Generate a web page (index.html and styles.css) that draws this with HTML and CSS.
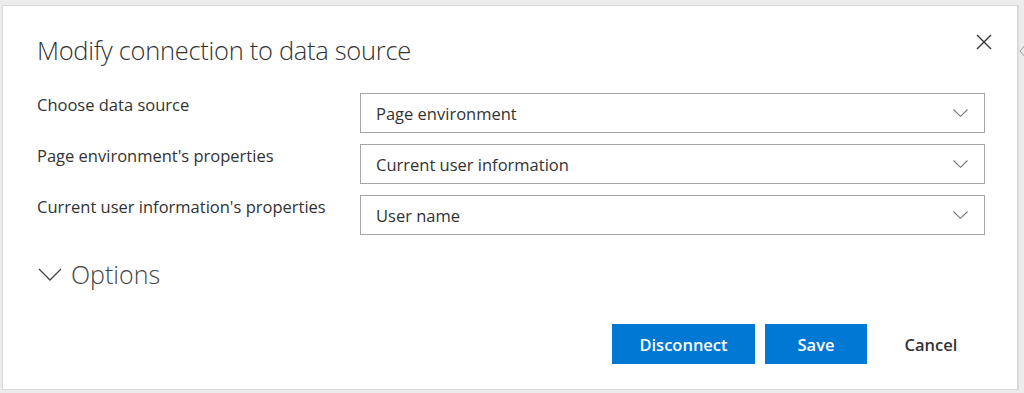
FILE: index.html
```html
<!DOCTYPE html>
<html lang="en">
<head>
    <meta charset="UTF-8">
    <title>Modify connection to data source</title>
    <link rel="stylesheet" href="styles.css">
</head>
<body>
    <div class="dialog">
        <div class="dialog-header">
            <h1 class="dialog-title">Modify connection to data source</h1>
            <button class="close-button" aria-label="Close">
                <svg width="16" height="16" viewBox="0 0 16 16"><path d="M1 1 L15 15 M15 1 L1 15" stroke="#333" stroke-width="1.4" fill="none"/></svg>
            </button>
        </div>

        <div class="form-grid">
            <label class="field-label">Choose data source</label>
            <div class="dropdown">
                <span>Page environment</span>
                <svg class="chevron" width="15" height="8" viewBox="0 0 15 8"><path d="M0.5 0.5 L7.5 7.3 L14.5 0.5" stroke="#777" stroke-width="1.1" fill="none"/></svg>
            </div>

            <label class="field-label">Page environment's properties</label>
            <div class="dropdown">
                <span>Current user information</span>
                <svg class="chevron" width="15" height="8" viewBox="0 0 15 8"><path d="M0.5 0.5 L7.5 7.3 L14.5 0.5" stroke="#777" stroke-width="1.1" fill="none"/></svg>
            </div>

            <label class="field-label">Current user information's properties</label>
            <div class="dropdown">
                <span>User name</span>
                <svg class="chevron" width="15" height="8" viewBox="0 0 15 8"><path d="M0.5 0.5 L7.5 7.3 L14.5 0.5" stroke="#777" stroke-width="1.1" fill="none"/></svg>
            </div>
        </div>

        <div class="options-toggle">
            <svg width="24" height="14" viewBox="0 0 24 14"><path d="M1 1 L12 12 L23 1" stroke="#444" stroke-width="1.3" fill="none"/></svg>
            <span>Options</span>
        </div>

        <div class="dialog-footer">
            <button class="btn btn-primary btn-disconnect">Disconnect</button>
            <button class="btn btn-primary btn-save">Save</button>
            <button class="btn btn-plain">Cancel</button>
        </div>
    </div>
    <div class="side-strip">
        <svg width="8" height="16" viewBox="0 0 8 16"><path d="M7 1 L1 8 L7 15" stroke="#999" stroke-width="1" fill="none"/></svg>
    </div>
</body>
</html>
```

FILE: styles.css
```css
body {
    margin: 0;
    padding: 5px 0 3px 2px;
    background-color: #ececec;
    font-family: "Open Sans", "Noto Sans", Arial, sans-serif;
    color: #333;
    display: flex;
    height: 393px;
    box-sizing: border-box;
    overflow: hidden;
}
.dialog {
    flex-shrink: 0;
    width: 1016px;
    height: 385px;
    box-sizing: border-box;
    background-color: white;
    border: 1px solid #d8d8d8;
    padding: 0 32px 0 34px;
    display: flex;
    flex-direction: column;
}
.side-strip {
    flex: 1;
    min-width: 0;
    overflow: hidden;
    padding-top: 37px;
    border-left: 1px solid #dcdcdc;
}
.dialog-header {
    display: flex;
    justify-content: space-between;
    align-items: center;
    height: 87px;
}
.dialog-title {
    margin: 0;
    font-size: 25.5px;
    font-weight: 300;
    color: #333;
    letter-spacing: -0.3px;
}
.close-button {
    align-self: flex-start;
    background: none;
    border: none;
    padding: 0;
    margin: 28px -7px 0 0;
    cursor: pointer;
}
.form-grid {
    display: grid;
    grid-template-columns: 323px 1fr;
    grid-auto-rows: 40px;
    row-gap: 11px;
}
.field-label {
    font-size: 16.5px;
    color: #333;
}
.dropdown {
    border: 1px solid #a6a6a6;
    display: flex;
    align-items: center;
    justify-content: space-between;
    padding: 0 16px 0 15px;
    font-size: 16.5px;
    color: #333;
}
.chevron {
    margin-bottom: 1px;
}
.options-toggle {
    display: flex;
    align-items: center;
    gap: 9px;
    margin-top: 22px;
    height: 34px;
    font-size: 25px;
    font-weight: 300;
    color: #444;
}
.options-toggle svg {
    margin-top: 1px;
    margin-left: 1px;
}
.dialog-footer {
    display: flex;
    justify-content: flex-end;
    gap: 10px;
    margin-top: 33px;
}
.btn {
    height: 40px;
    border: none;
    font-family: "Open Sans", "Noto Sans", Arial, sans-serif;
    font-size: 16.5px;
    font-weight: 600;
    cursor: pointer;
}
.btn-primary {
    background-color: #0078d4;
    color: white;
}
.btn-disconnect {
    width: 143px;
}
.btn-save {
    width: 102px;
}
.btn-plain {
    background: none;
    color: #333;
    width: 108px;
}
```
